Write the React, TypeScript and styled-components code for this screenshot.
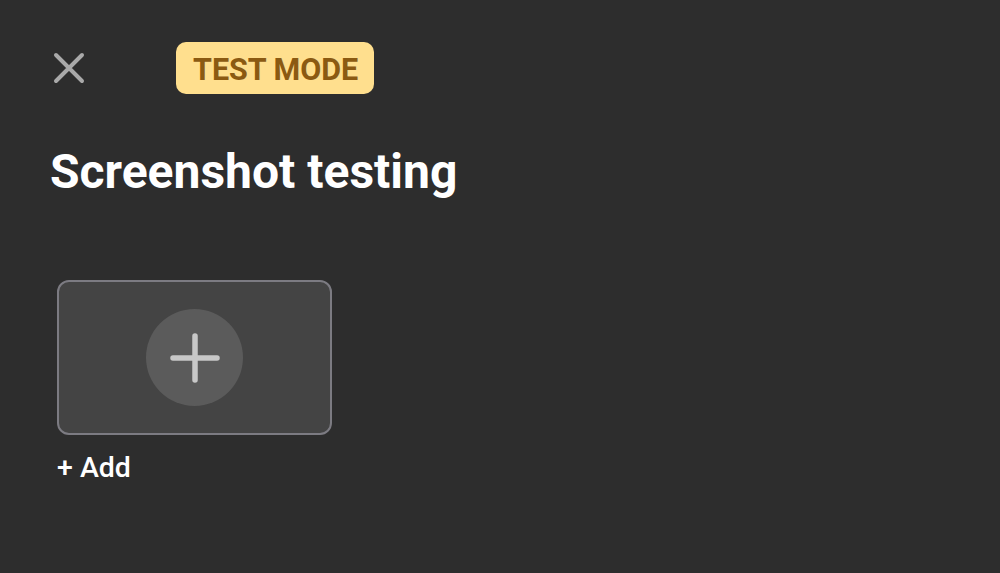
import React from "react";
import styled, { createGlobalStyle } from "styled-components";

const Global = createGlobalStyle`
  html, body {
    margin: 0;
    padding: 0;
    background: #2d2d2d;
    font-family: Roboto, "Noto Sans", Arial, sans-serif;
  }
`;

const Page = styled.main`
  width: 1000px;
  height: 573px;
  box-sizing: border-box;
  padding: 42px 50px 0 50px;
  background: #2d2d2d;
  color: #fff;
`;

const TopBar = styled.header`
  display: flex;
  align-items: center;
  height: 52px;
`;

const CloseButton = styled.button`
  width: 38px;
  height: 38px;
  padding: 0;
  border: none;
  background: none;
  display: flex;
  align-items: center;
  justify-content: center;
  cursor: pointer;
`;

const Badge = styled.span`
  margin-left: 88px;
  height: 52px;
  box-sizing: border-box;
  padding: 2px 16px 0 17px;
  display: flex;
  align-items: center;
  background: #ffdf8e;
  color: #8b5a12;
  border-radius: 10px;
  font-size: 30.5px;
  font-weight: 700;
`;

const Title = styled.h1`
  margin: 50px 0 0 0;
  font-size: 48px;
  font-weight: 700;
  line-height: 56px;
`;

const Tiles = styled.section`
  margin-top: 80px;
  margin-left: 7px;
  display: flex;
  gap: 20px;
`;

const Tile = styled.div`
  display: flex;
  flex-direction: column;
  gap: 16px;
`;

const AddCard = styled.button`
  width: 275px;
  height: 155px;
  box-sizing: border-box;
  border: 2px solid #7c7b82;
  border-radius: 12px;
  background: #444444;
  display: flex;
  align-items: center;
  justify-content: center;
  padding: 0;
  cursor: pointer;
`;

const Circle = styled.span`
  width: 97px;
  height: 97px;
  border-radius: 50%;
  background: #5b5b5b;
  display: flex;
  align-items: center;
  justify-content: center;
`;

const AddLabel = styled.span`
  font-size: 28.5px;
  font-weight: 500;
  line-height: 34px;
  color: #fff;
`;

export default function App() {
  return (
    <>
      <Global />
      <Page>
        <TopBar>
          <CloseButton aria-label="Close">
            <svg width="34" height="34" viewBox="0 0 34 34">
              <path
                d="M4 4 L30 30 M30 4 L4 30"
                stroke="#a9a9a9"
                strokeWidth="4"
                strokeLinecap="round"
              />
            </svg>
          </CloseButton>
          <Badge>TEST MODE</Badge>
        </TopBar>
        <Title>Screenshot testing</Title>
        <Tiles>
          <Tile>
            <AddCard aria-label="Add">
              <Circle>
                <svg width="52" height="52" viewBox="0 0 52 52">
                  <path
                    d="M26 4 V48 M4 26 H48"
                    stroke="#c8c8c8"
                    strokeWidth="5.5"
                    strokeLinecap="round"
                  />
                </svg>
              </Circle>
            </AddCard>
            <AddLabel>+ Add</AddLabel>
          </Tile>
        </Tiles>
      </Page>
    </>
  );
}
